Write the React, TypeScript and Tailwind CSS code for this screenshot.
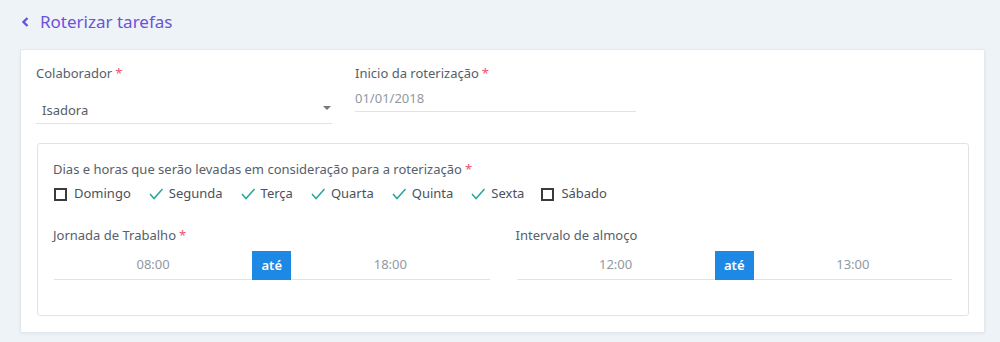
import { ReactNode } from "react";

const font = { fontFamily: '"Noto Sans", "Open Sans", sans-serif' };

function Req() {
    return <span className="text-[#f0506e] ml-[3px]">*</span>;
}

function Check() {
    return (
        <svg width="16" height="14" viewBox="0 0 16 14" className="shrink-0">
            <polyline points="2,7 6,11.5 14.5,2" fill="none" stroke="#26a69a" strokeWidth="1.5" />
        </svg>
    );
}

function Box() {
    return <span className="w-[13px] h-[13px] border-2 border-[#3b3b3b] shrink-0 mr-[2px]" />;
}

function Day({ label, checked }: { label: string; checked: boolean }) {
    return (
        <div className="flex items-center gap-[5px] mr-[17px]">
            {checked ? <Check /> : <Box />}
            <span>{label}</span>
        </div>
    );
}

function TimeRange({ label, from, to, req }: { label: ReactNode; from: string; to: string; req?: boolean }) {
    return (
        <div>
            <div className="text-[13px] text-[#56606b] h-[18px] leading-[18px]">
                {label}
                {req && <Req />}
            </div>
            <div className="mt-[7px] flex items-stretch h-[29px] border-b border-[#dfe3e8] mx-[1px]">
                <div className="flex-1 flex items-center justify-center text-[13px] text-[#9099a3]">{from}</div>
                <div className="w-[39px] bg-[#1e88e5] text-white text-[13px] font-semibold flex items-center justify-center -mb-px">até</div>
                <div className="flex-1 flex items-center justify-center text-[13px] text-[#9099a3]">{to}</div>
            </div>
        </div>
    );
}

export default function App() {
    const days = [
        { label: "Domingo", checked: false },
        { label: "Segunda", checked: true },
        { label: "Terça", checked: true },
        { label: "Quarta", checked: true },
        { label: "Quinta", checked: true },
        { label: "Sexta", checked: true },
        { label: "Sábado", checked: false },
    ];

    return (
        <div className="w-[1000px] h-[342px] bg-[#eef3f7] overflow-hidden" style={font}>
            <div className="flex items-center h-[42px] pl-[21px] pt-[1px]">
                <svg width="9" height="12" viewBox="0 0 9 12" className="mr-[10px]">
                    <polyline points="6.5,2 2.5,6 6.5,10" fill="none" stroke="#6a52dc" strokeWidth="2.4" />
                </svg>
                <span className="text-[17px] text-[#6a52dc]">Roterizar tarefas</span>
            </div>

            <div className="ml-[20px] mt-[7px] w-[965px] h-[284px] bg-white border border-[#e3e8ee] rounded-[2px] shadow-[0_1px_3px_rgba(0,0,0,0.06)] px-[15px] pt-[14px]">
                <div className="flex gap-[23px]">
                    <div className="w-[296px]">
                        <div className="text-[13px] text-[#56606b] h-[18px] leading-[18px]">
                            Colaborador
                            <Req />
                        </div>
                        <div className="mt-[17px] h-[25px] flex items-center justify-between border-b border-[#dfe3e8] pl-[6px] pr-[1px]">
                            <span className="text-[13px] text-[#555d66]">Isadora</span>
                            <svg width="8" height="4" viewBox="0 0 8 4" className="mb-[6px]">
                                <polygon points="0,0 8,0 4,4" fill="#777" />
                            </svg>
                        </div>
                    </div>
                    <div className="w-[281px]">
                        <div className="text-[13px] text-[#56606b] h-[18px] leading-[18px]">
                            Inicio da roterização
                            <Req />
                        </div>
                        <div className="mt-[4px] h-[26px] flex items-center border-b border-[#dfe3e8]">
                            <span className="text-[13px] text-[#9099a3]">01/01/2018</span>
                        </div>
                    </div>
                </div>

                <div className="mt-[19px] ml-[1px] border border-[#dfe3e8] rounded-[3px] h-[173px] px-[15px] pt-[16px]">
                    <div className="text-[13px] text-[#56606b] h-[18px] leading-[18px]">
                        Dias e horas que serão levadas em consideração para a roterização
                        <Req />
                    </div>
                    <div className="mt-[6px] flex items-center text-[13px] text-[#4a525c] h-[20px] pl-[1px]">
                        {days.map(d => (
                            <Day key={d.label} label={d.label} checked={d.checked} />
                        ))}
                    </div>
                    <div className="mt-[22px] grid grid-cols-2 gap-[25px]">
                        <TimeRange label="Jornada de Trabalho" from="08:00" to="18:00" req />
                        <TimeRange label="Intervalo de almoço" from="12:00" to="13:00" />
                    </div>
                </div>
            </div>
        </div>
    );
}
